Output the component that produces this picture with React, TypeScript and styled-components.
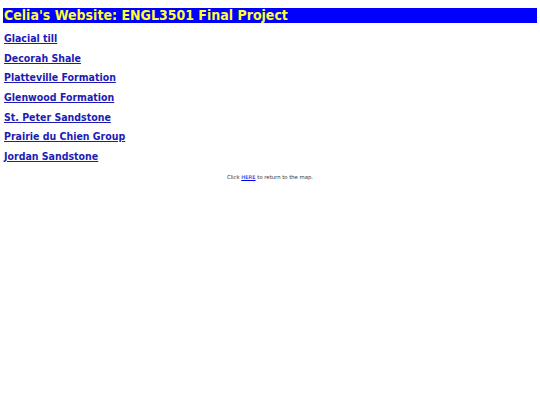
import React from "react";
import styled, { createGlobalStyle } from "styled-components";

const Global = createGlobalStyle`
  html, body { margin: 0; padding: 0; background: #ffffff; }
  body { padding: 4px 3px; font-family: "DejaVu Sans", Verdana, sans-serif; }
`;

const Banner = styled.h1`
  margin: 4px 0 0;
  background: #0000ff;
  color: #ffff33;
  font-family: "DejaVu Sans Condensed", "DejaVu Sans", sans-serif;
  font-stretch: condensed;
  font-size: 14px;
  line-height: 15px;
  font-weight: bold;
  padding: 0 1px;
`;

const UnitList = styled.div`
  display: flex;
  flex-direction: column;
  gap: 5.7px;
  margin-top: 8px;
  padding-left: 1px;
`;

const UnitLink = styled.a`
  color: #1c1cb4;
  font-family: "DejaVu Sans Condensed", "DejaVu Sans", sans-serif;
  font-stretch: condensed;
  font-size: 10.5px;
  line-height: 14px;
  font-weight: bold;
  text-decoration: underline;
  align-self: flex-start;
`;

const Footer = styled.p`
  margin: 11px 0 0;
  text-align: center;
  font-size: 5.3px;
  line-height: 7px;
  color: #333;
`;

const FooterLink = styled.a`
  color: #0000ee;
`;

const units = [
  "Glacial till",
  "Decorah Shale",
  "Platteville Formation",
  "Glenwood Formation",
  "St. Peter Sandstone",
  "Prairie du Chien Group",
  "Jordan Sandstone",
];

export default function App() {
  return (
    <>
      <Global />
      <Banner>Celia's Website: ENGL3501 Final Project</Banner>
      <UnitList>
        {units.map((u) => (
          <UnitLink key={u} href="#">
            {u}
          </UnitLink>
        ))}
      </UnitList>
      <Footer>
        Click <FooterLink href="#">HERE</FooterLink> to return to the map.
      </Footer>
    </>
  );
}
